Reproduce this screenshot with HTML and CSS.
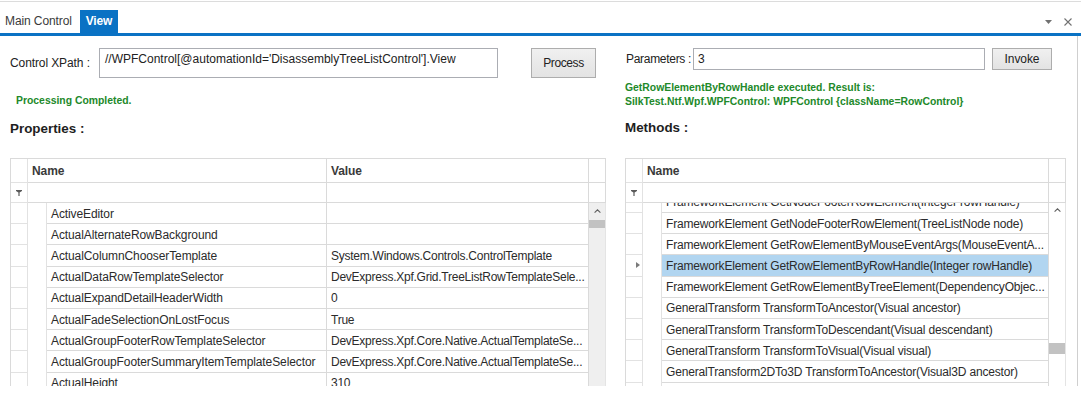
FILE: index.html
```html
<!DOCTYPE html>
<html>
<head>
<meta charset="utf-8">
<title>View</title>
<link rel="stylesheet" href="styles.css">
</head>
<body>
<div class="topline"></div>
<div class="tabstrip">
  <div class="tab tab-main">Main Control</div>
  <div class="tab tab-view">View</div>
  <div class="tab-tools">
    <svg class="ico" width="7" height="4" viewBox="0 0 7 4"><path d="M0 0H7L3.5 4Z" fill="#717171"/></svg>
    <svg class="ico" width="8" height="8" viewBox="0 0 8 8"><path d="M0.5 0.5L7.5 7.5M7.5 0.5L0.5 7.5" stroke="#717171" stroke-width="1.1" fill="none"/></svg>
  </div>
</div>
<div class="tabline"></div>
<div class="panel">
  <div class="col col-left">
    <div class="head">
      <div class="toolbar tb-tall">
        <div class="lbl lbl-xpath">Control XPath :</div>
        <div class="textbox tb-xpath">//WPFControl[@automationId='DisassemblyTreeListControl'].View</div>
        <div class="btn btn-process">Process</div>
      </div>
      <div class="status">Processing Completed.</div>
      <div class="title title-left">Properties :</div>
    </div>
    <div class="grid">
      <div class="hrow">
        <div class="c c-ind"></div>
        <div class="c c-hname hd">Name</div>
        <div class="c c-val hd">Value</div>
        <div class="c c-sc"></div>
      </div>
      <div class="frow">
        <div class="c c-ind ctr"><svg width="6" height="6" viewBox="0 0 6 6"><path d="M0 0H6V1L3.6 2.6V6H2.4V2.6L0 1Z" fill="#5a5a5a"/></svg></div>
        <div class="c c-hname"></div>
        <div class="c c-val"></div>
        <div class="c c-sc"></div>
      </div>
      <div class="body">
        <div class="rows">
          <div class="row"><div class="c c-ind"></div><div class="c c-indent"></div><div class="c c-name">ActiveEditor</div><div class="c c-val"></div></div>
          <div class="row"><div class="c c-ind"></div><div class="c c-indent"></div><div class="c c-name">ActualAlternateRowBackground</div><div class="c c-val"></div></div>
          <div class="row"><div class="c c-ind"></div><div class="c c-indent"></div><div class="c c-name">ActualColumnChooserTemplate</div><div class="c c-val">System.Windows.Controls.ControlTemplate</div></div>
          <div class="row"><div class="c c-ind"></div><div class="c c-indent"></div><div class="c c-name">ActualDataRowTemplateSelector</div><div class="c c-val">DevExpress.Xpf.Grid.TreeListRowTemplateSele...</div></div>
          <div class="row"><div class="c c-ind"></div><div class="c c-indent"></div><div class="c c-name">ActualExpandDetailHeaderWidth</div><div class="c c-val">0</div></div>
          <div class="row"><div class="c c-ind"></div><div class="c c-indent"></div><div class="c c-name">ActualFadeSelectionOnLostFocus</div><div class="c c-val">True</div></div>
          <div class="row"><div class="c c-ind"></div><div class="c c-indent"></div><div class="c c-name">ActualGroupFooterRowTemplateSelector</div><div class="c c-val">DevExpress.Xpf.Core.Native.ActualTemplateSe...</div></div>
          <div class="row"><div class="c c-ind"></div><div class="c c-indent"></div><div class="c c-name">ActualGroupFooterSummaryItemTemplateSelector</div><div class="c c-val">DevExpress.Xpf.Core.Native.ActualTemplateSe...</div></div>
          <div class="row"><div class="c c-ind"></div><div class="c c-indent"></div><div class="c c-name">ActualHeight</div><div class="c c-val">310</div></div>
        </div>
        <div class="vscroll vs-left">
          <svg class="sc-arrow" width="7" height="4" viewBox="0 0 7 4"><path d="M0.6 3.6L3.5 0.8L6.4 3.6" stroke="#606060" stroke-width="1.1" fill="none"/></svg>
          <div class="thumb thumb-left"></div>
        </div>
      </div>
    </div>
  </div>

  <div class="col col-right">
    <div class="head">
      <div class="toolbar tb-short">
        <div class="lbl lbl-params">Parameters :</div>
        <div class="textbox tb-params">3</div>
        <div class="btn btn-invoke">Invoke</div>
      </div>
      <div class="result">GetRowElementByRowHandle executed. Result is:<br>SilkTest.Ntf.Wpf.WPFControl: WPFControl {className=RowControl}</div>
      <div class="title title-right">Methods :</div>
    </div>
    <div class="grid grid-right">
      <div class="hrow">
        <div class="c c-ind"></div>
        <div class="c c-hname-r hd">Name</div>
        <div class="c c-sc"></div>
      </div>
      <div class="frow">
        <div class="c c-ind ctr"><svg width="6" height="6" viewBox="0 0 6 6"><path d="M0 0H6V1L3.6 2.6V6H2.4V2.6L0 1Z" fill="#5a5a5a"/></svg></div>
        <div class="c c-hname-r"></div>
        <div class="c c-sc"></div>
      </div>
      <div class="body">
        <div class="rows">
          <div class="rows-inner scrolled">
            <div class="row"><div class="c c-ind"></div><div class="c c-indent"></div><div class="c c-name-r">FrameworkElement GetNodeFooterRowElement(Integer rowHandle)</div></div>
            <div class="row"><div class="c c-ind"></div><div class="c c-indent"></div><div class="c c-name-r">FrameworkElement GetNodeFooterRowElement(TreeListNode node)</div></div>
            <div class="row"><div class="c c-ind"></div><div class="c c-indent"></div><div class="c c-name-r">FrameworkElement GetRowElementByMouseEventArgs(MouseEventA...</div></div>
            <div class="row sel"><div class="c c-ind cur"><svg width="4" height="6" viewBox="0 0 4 6"><path d="M0 0L4 3L0 6Z" fill="#7a7a7a"/></svg></div><div class="c c-indent"></div><div class="c c-name-r">FrameworkElement GetRowElementByRowHandle(Integer rowHandle)</div></div>
            <div class="row"><div class="c c-ind"></div><div class="c c-indent"></div><div class="c c-name-r">FrameworkElement GetRowElementByTreeElement(DependencyObjec...</div></div>
            <div class="row"><div class="c c-ind"></div><div class="c c-indent"></div><div class="c c-name-r">GeneralTransform TransformToAncestor(Visual ancestor)</div></div>
            <div class="row"><div class="c c-ind"></div><div class="c c-indent"></div><div class="c c-name-r">GeneralTransform TransformToDescendant(Visual descendant)</div></div>
            <div class="row"><div class="c c-ind"></div><div class="c c-indent"></div><div class="c c-name-r">GeneralTransform TransformToVisual(Visual visual)</div></div>
            <div class="row"><div class="c c-ind"></div><div class="c c-indent"></div><div class="c c-name-r">GeneralTransform2DTo3D TransformToAncestor(Visual3D ancestor)</div></div>
            <div class="row"><div class="c c-ind"></div><div class="c c-indent"></div><div class="c c-name-r"></div></div>
          </div>
        </div>
        <div class="vscroll vs-right">
          <svg class="sc-arrow sc-arrow-r" width="7" height="4" viewBox="0 0 7 4"><path d="M0.6 3.6L3.5 0.8L6.4 3.6" stroke="#606060" stroke-width="1.1" fill="none"/></svg>
          <div class="thumb thumb-right"></div>
        </div>
      </div>
    </div>
  </div>
</div>
</body>
</html>
```

FILE: styles.css
```css
* { box-sizing: border-box; }

html, body {
  margin: 0;
  padding: 0;
  background: #ffffff;
}

body {
  padding-top: 1px;
  width: 1081px;
  height: 405px;
  overflow: hidden;
  font-family: "Liberation Sans", Arial, sans-serif;
  font-size: 12px;
  letter-spacing: -0.1px;
  color: #2b2b2b;
}

.topline {
  height: 1px;
  background: #dcdcdc;
}

.tabstrip {
  display: flex;
  height: 23px;
  margin-top: 8px;
  padding-right: 9px;
}

.tab {
  line-height: 23px;
  white-space: nowrap;
}

.tab-main {
  width: 80px;
  padding-left: 5px;
  color: #3a3a3a;
}

.tab-view {
  width: 38px;
  text-align: center;
  background: #0a72c4;
  color: #ffffff;
  font-weight: bold;
}

.tab-tools {
  margin-left: auto;
  display: flex;
  align-items: center;
  gap: 12px;
}

.ico { display: block; }

.tabline {
  height: 3px;
  background: #0a72c4;
}

.panel {
  width: 1078px;
  height: 350px;
  border-right: 1px solid #cfcfcf;
  padding-left: 10px;
  display: flex;
  gap: 19px;
  overflow: hidden;
}

.col {
  display: flex;
  flex-direction: column;
  height: 100%;
}

.col-left { width: 596px; }
.col-right { width: 441px; }

.head {
  height: 122px;
  flex: none;
  padding-top: 12px;
}

.toolbar {
  display: flex;
  align-items: center;
}

.tb-tall { height: 30px; }
.tb-short { height: 22px; }

.lbl { white-space: nowrap; color: #222; }
.lbl-xpath { width: 89px; }
.lbl-params { width: 68px; padding-left: 1px; letter-spacing: -0.3px; }

.textbox {
  border: 1px solid #abadb3;
  background: #fff;
  color: #222;
  white-space: nowrap;
  overflow: hidden;
}

.tb-xpath {
  width: 399px;
  height: 30px;
  padding: 2px 5px 0;
  line-height: 17px;
  letter-spacing: 0;
}

.tb-params {
  width: 292px;
  height: 22px;
  padding: 0 4px;
  line-height: 20px;
}

.btn {
  border: 1px solid #adadad;
  background: linear-gradient(#f0f0f0, #e3e3e3);
  color: #222;
  display: flex;
  align-items: center;
  justify-content: center;
}

.btn-process {
  margin-left: 33px;
  width: 65px;
  height: 30px;
  letter-spacing: -0.4px;
}

.btn-invoke {
  margin-left: 7px;
  width: 60px;
  height: 22px;
}

.status {
  margin-top: 16px;
  padding-left: 6px;
  line-height: 14px;
  font-size: 10.4px;
  font-weight: bold;
  color: #22892a;
  letter-spacing: 0;
}

.result {
  margin-top: 11px;
  line-height: 14px;
  font-size: 10.4px;
  font-weight: bold;
  color: #22892a;
  letter-spacing: 0;
  white-space: nowrap;
}

.title {
  line-height: 18px;
  font-size: 13.4px;
  font-weight: bold;
  color: #1e1e1e;
  letter-spacing: 0;
}

.title-left { margin-top: 12px; }
.title-right { margin-top: 10px; }

/* grids */
.grid {
  flex: 1;
  min-height: 0;
  display: flex;
  flex-direction: column;
  border-left: 1px solid #dadada;
  border-top: 1px solid #dadada;
  overflow: hidden;
}

.hrow, .frow, .row {
  display: flex;
  flex: none;
}

.hrow { height: 24px; }
.frow { height: 20px; }
.row { height: 21.2px; }

.c {
  flex: none;
  border-right: 1px solid #dadada;
  border-bottom: 1px solid #dadada;
  white-space: nowrap;
  overflow: hidden;
  padding-left: 4px;
  display: flex;
  align-items: center;
  padding-top: 1px;
}

.hd {
  font-weight: bold;
  color: #3a3a3a;
  padding-top: 0;
}

.ctr { justify-content: center; padding-left: 0; padding-top: 0; }

.c-ind { width: 17px; border-right-color: #e2e2e2; border-bottom-color: #e2e2e2; }
.c-hname { width: 299px; }
.c-val { width: 262px; letter-spacing: -0.25px; }
.c-sc { width: 17px; }
.c-indent { width: 19px; border-bottom: none; border-right-color: #e2e2e2; }
.c-name { width: 280px; }
.c-hname-r { width: 406px; }
.c-name-r { width: 387px; letter-spacing: -0.18px; }
.hd.c-val { letter-spacing: -0.1px; }

.cur { justify-content: flex-end; padding-right: 2px; padding-top: 0; }

.row.sel .c-name-r { background: #b1d5f0; }

.body {
  flex: 1;
  min-height: 0;
  display: flex;
}

.rows {
  overflow: hidden;
  display: flex;
  flex-direction: column;
}

.rows-inner {
  display: flex;
  flex-direction: column;
}

.scrolled { margin-top: -11.2px; }

.vscroll {
  width: 17px;
  flex: none;
  border-right: 1px solid #e4e4e4;
  display: flex;
  flex-direction: column;
  align-items: center;
}

.vs-left { background: #efefef; }
.vs-right { background: #ffffff; }

.sc-arrow {
  display: block;
  margin-top: 6px;
  flex: none;
}

.sc-arrow-r { margin-top: 5px; }

.thumb {
  width: 16px;
  background: #c2c2c2;
  flex: none;
}

.thumb-left { margin-top: 7px; height: 8px; }
.thumb-right { margin-top: 131px; height: 11px; }
```
